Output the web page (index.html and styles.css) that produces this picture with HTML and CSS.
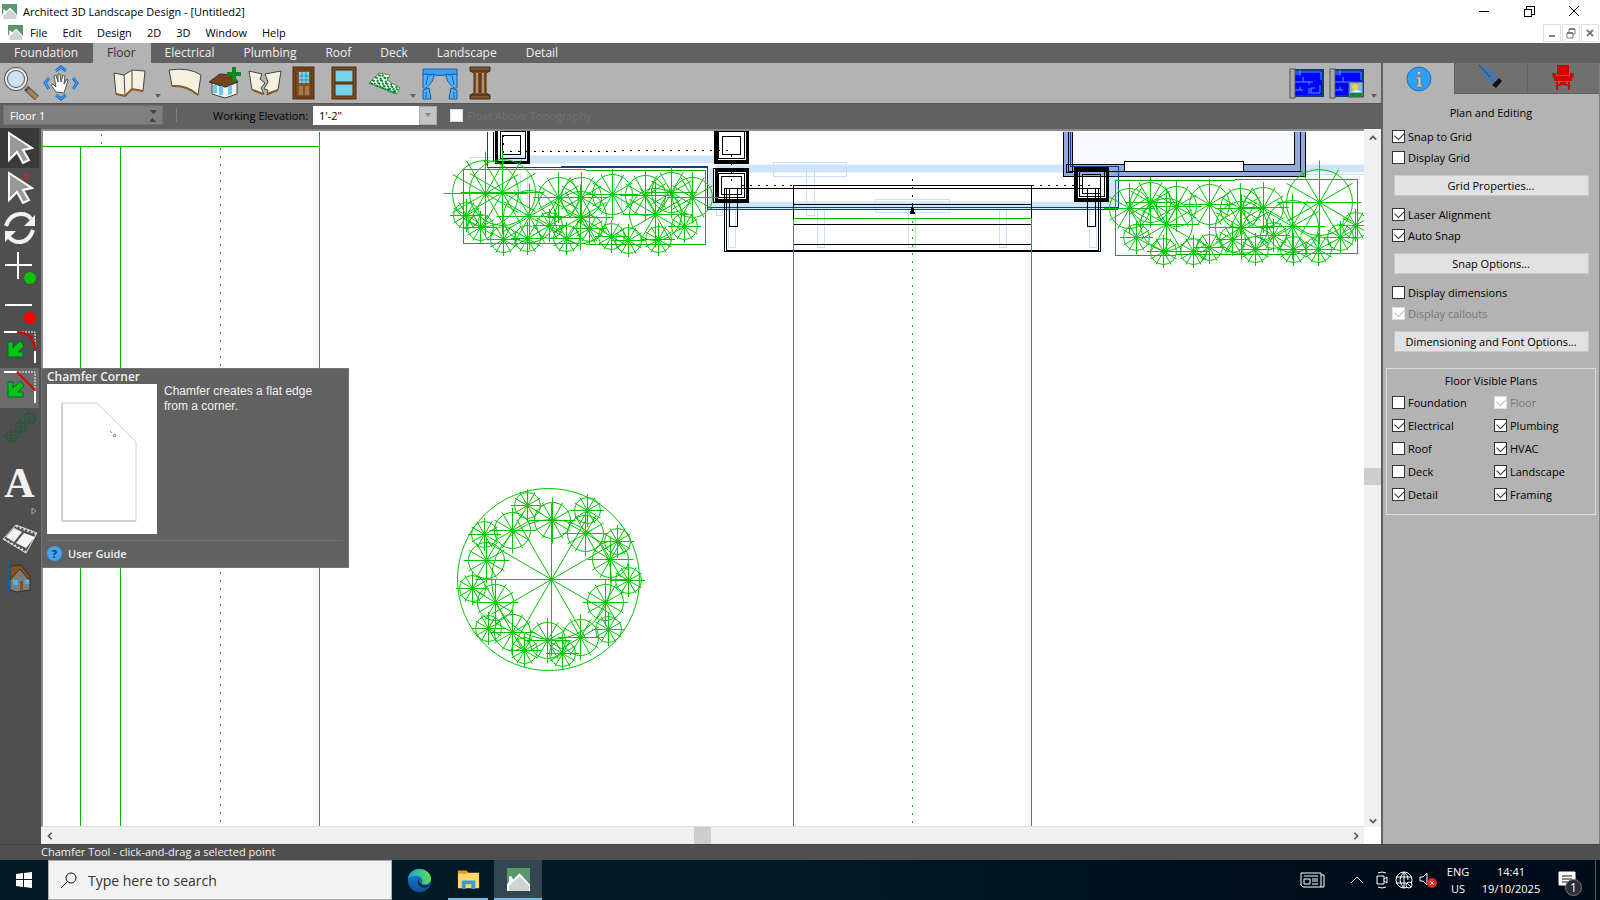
FILE: index.html
```html
<!DOCTYPE html>
<html lang="en">
<head>
    <meta charset="UTF-8">
    <meta name="viewport" content="width=device-width, initial-scale=1.0">
    <title>Architect 3D Landscape Design - [Untitled2]</title>
    <link rel="stylesheet" href="styles.css">
</head>
<body>
    <!-- Shared symbols -->
    <svg class="defs" width="0" height="0">
        <defs>
            <symbol id="logo" viewBox="0 0 22 22">
                <rect width="22" height="22" fill="#5c966f"/>
                <path d="M2 8v5l-2 3v6h22v-6L12 5 6 11 4 8z" fill="#fff"/>
                <path d="M2 22v-5L12 8l9 9v5z" fill="#d2d2d2"/>
            </symbol>
            <symbol id="cursor" viewBox="0 0 40 40">
                <path d="M9 5l23 15-9 2 6 10-6 3-6-11-8 8z" fill="#999" stroke="#fff" stroke-width="2"/>
            </symbol>
            <symbol id="blueprint" viewBox="0 0 40 40">
                <rect x="7" y="7" width="30" height="26" fill="#00f" stroke="#123a7c" stroke-width="2"/>
                <path d="M9 9h26v8M14 7v6m0-2h-5M9 19h18m-10 0v-5m6 8v-4M9 27h8m-3 0v-3m9 1v6m11-9v8H25v-5h4" fill="none" stroke="#4aa3ff"/>
                <rect x="4" y="6" width="5" height="29" fill="#aaa" stroke="#555"/>
            </symbol>
            <!-- Plan symbol for one plant, radius 1 -->
            <g id="plant">
                <circle r="1"/>
                <path d="M-1.27 0H1.27M0-1.27V1.27M-1-.58L1 .58M-1 .58L1-.58M-.58-1L.58 1M.58-1L-.58 1"/>
            </g>
        </defs>
    </svg>

    <header>
        <div class="titlebar">
            <svg class="app-icon"><use href="#logo"/></svg>
            <h1>Architect 3D Landscape Design - [Untitled2]</h1>
            <div class="caption">
                <button aria-label="Minimize"><svg viewBox="0 0 12 12"><path d="M1 6h10"/></svg></button>
                <button aria-label="Restore"><svg viewBox="0 0 12 12"><path d="M1 4h7v7H1zM3 4V1h8v8H8"/></svg></button>
                <button aria-label="Close"><svg viewBox="0 0 12 12"><path d="M1 1l10 10M11 1L1 11"/></svg></button>
            </div>
        </div>
        <nav class="menubar">
            <svg class="app-icon"><use href="#logo"/></svg>
            <a href="#">File</a>
            <a href="#">Edit</a>
            <a href="#">Design</a>
            <a href="#">2D</a>
            <a href="#">3D</a>
            <a href="#">Window</a>
            <a href="#">Help</a>
            <div class="mdi">
                <button aria-label="Minimize plan"><svg viewBox="0 0 12 12"><path d="M3 9h6"/></svg></button>
                <button aria-label="Restore plan"><svg viewBox="0 0 12 12"><path d="M2 6h6v5H2zM4 5V2h6v5H8" stroke-width="1"/><path d="M2 6h6M4 2h6"/></svg></button>
                <button aria-label="Close plan"><svg viewBox="0 0 12 12"><path d="M3 3l6 6M9 3L3 9"/></svg></button>
            </div>
        </nav>
        <nav class="tabs">
            <a href="#">Foundation</a>
            <a href="#" class="active">Floor</a>
            <a href="#">Electrical</a>
            <a href="#">Plumbing</a>
            <a href="#">Roof</a>
            <a href="#">Deck</a>
            <a href="#">Landscape</a>
            <a href="#">Detail</a>
        </nav>
    </header>

    <main>
        <div class="work">
            <div class="toolbar">
                <button aria-label="Zoom"><svg viewBox="0 0 40 40">
                    <path d="M25 25l11 10" stroke="#555" stroke-width="6"/>
                    <path d="M27 27l9 8" stroke="#a5835b" stroke-width="4"/>
                    <circle cx="15" cy="16" r="10" fill="#cfe0ee" stroke="#555" stroke-width="4"/>
                    <circle cx="15" cy="16" r="10" fill="none" stroke="#e8e8e8" stroke-width="2"/>
                </svg></button>
                <button class="spaced" aria-label="Pan"><svg viewBox="0 0 40 40">
                    <path d="M15 8l5-4 5 4M15 32l5 4 5-4M8 15l-4 5 4 6M32 15l4 5-4 6" fill="none" stroke="#1674c4" stroke-width="3"/>
                    <path d="M15 8l5-4 5 4M15 32l5 4 5-4M8 15l-4 5 4 6M32 15l4 5-4 6" fill="none" stroke="#4eb1ff"/>
                    <path d="M15 29l-5-7 2-1 3 3-2-11 2-1 2 7V11h2l1 8 2-7 2 1-1 8 3-5 1 1-4 13z" fill="#fff" stroke="#555"/>
                </svg></button>
                <button aria-label="Wall"><svg viewBox="0 0 40 40">
                    <path d="M4 10l10 2 8-5 13 1-2 20-11-2-7 7-9-2z" fill="#f5f0e0" stroke="#444"/>
                    <path d="M14 12l1 20M22 7v18" stroke="#444"/>
                    <path d="M6 31l9 2 7-7 11 2" fill="none" stroke="#8a5a20" stroke-width="2"/>
                </svg></button>
                <button class="more" aria-label="More walls"></button>
                <button aria-label="Curved wall"><svg viewBox="0 0 40 40">
                    <path d="M4 7q20-3 32 5l-3 20q-11-10-26-9z" fill="#f5f0e0" stroke="#444"/>
                    <path d="M7 23q15-1 26 9" fill="none" stroke="#8a5a20" stroke-width="2"/>
                </svg></button>
                <button aria-label="Room addition"><svg viewBox="0 0 40 40">
                    <path d="M7 20l14 4 11-5v12l-12 4-13-4z" fill="#f3f3ee" stroke="#444"/>
                    <path d="M4 19L15 11l13 1 5 7-13 5z" fill="#74431d" stroke="#333"/>
                    <path d="M8 22h4v8H8zM14 23h4v9h-4zM23 23l4-1v9l-4 1z" fill="#6cc9e8"/>
                    <path d="M29 4v14M22 11h14" stroke="#0a8a1c" stroke-width="4"/>
                </svg></button>
                <button aria-label="Break wall"><svg viewBox="0 0 40 40">
                    <path d="M4 8l13 3-2 5 5 4-4 5 3 6-12-4zM20 11l16-3-3 19-11 5 1-5-4-1 4-7z" fill="#f5f0e0" stroke="#444"/>
                    <path d="M8 27l10 4M22 31l11-4" stroke="#8a5a20" stroke-width="2"/>
                </svg></button>
                <button aria-label="Door"><svg viewBox="0 0 40 40">
                    <rect x="8" y="4" width="21" height="32" fill="#74451b" stroke="#4b2c10"/>
                    <rect x="11" y="7" width="15" height="27" fill="#855322" stroke="#5a3512"/>
                    <path d="M14 9h10v11H14z" fill="#7cd6ee"/>
                    <path d="M17 9v11M21 9v11M14 13h10M14 17h10" stroke="#3d8fb0"/>
                    <path d="M14 23h4v9h-4zM20 23h4v9h-4z" fill="#a3774f"/>
                </svg></button>
                <button aria-label="Window"><svg viewBox="0 0 40 40">
                    <rect x="7" y="4" width="24" height="32" fill="#7d4d1e" stroke="#4b2c10"/>
                    <path d="M10 7h18v12H10zM10 21h18v12H10z" fill="#78d2ea" stroke="#4b2c10"/>
                </svg></button>
                <button aria-label="Flooring"><svg viewBox="0 0 40 40">
                    <path d="M14 10l11 2-3 5 13 8-3 6L4 20z" fill="#fff" stroke="#3c8f4a"/>
                    <path d="M13 12l10 4M10 14l23 13M7 17l24 12M5 20l25 10" stroke="#0a8a2c" stroke-width="2" stroke-dasharray="3 3"/>
                    <path d="M14 11l9 4M12 14l21 11M9 16l23 12M6 19l23 11" stroke="#0a8a2c" stroke-width="2" stroke-dasharray="2 4" stroke-dashoffset="3"/>
                </svg></button>
                <button class="more" aria-label="More flooring"></button>
                <button aria-label="Curtains"><svg viewBox="0 0 40 40">
                    <path d="M3 6h34v7l-3-2q-14 3-28 0l-3 2z" fill="#3aa0f5" stroke="#1c5c9c"/>
                    <path d="M3 11q8 2 11 0 0 8-8 14H3zM37 11q-8 2-11 0 0 8 8 14h3zM3 27l6-2 2 11H3zM37 27l-6-2-2 11h8z" fill="#4eb1ff" stroke="#1c5c9c"/>
                    <path d="M8 13l-2 9M32 13l2 9M6 29v6M34 29v6" stroke="#1c5c9c"/>
                </svg></button>
                <button aria-label="Column"><svg viewBox="0 0 40 40">
                    <path d="M10 4h20v4l-4 2v20l4 2v4H10v-4l4-2V10l-4-2z" fill="#7d532d" stroke="#432b14"/>
                    <path d="M17 10v20M23 10v20" stroke="#b78d62" stroke-width="2"/>
                    <path d="M10 8h20M10 32h20M20 10v20" stroke="#432b14"/>
                </svg></button>
                <button class="push" aria-label="2D plan"><svg><use href="#blueprint"/></svg></button>
                <button aria-label="Plan with preview"><svg viewBox="0 0 40 40">
                    <use href="#blueprint"/>
                    <rect x="23" y="19" width="14" height="15" fill="#7fbbe6" stroke="#444"/>
                    <path d="M24 30h12v4H24z" fill="#178a2c"/>
                    <circle cx="29" cy="24" r="3" fill="#ffd21c"/>
                    <path d="M26 29q5-4 9 0z" fill="#fff"/>
                </svg></button>
                <button class="more" aria-label="More views"></button>
            </div>

            <div class="options">
                <select class="floor-select" aria-label="Current floor"><option>Floor 1</option></select>
                <span class="sep"></span>
                <label for="elevation" class="elevation-label">Working Elevation:</label>
                <input type="text" id="elevation" value="1'-2&quot;">
                <button class="drop" aria-label="Elevation list"></button>
                <label class="float"><input type="checkbox" disabled>Float Above Topography</label>
            </div>

            <div class="editor">
                <div class="tools">
                    <button class="pressed" aria-label="Select"><svg><use href="#cursor"/></svg></button>
                    <button aria-label="Select point"><svg viewBox="0 0 40 40"><use href="#cursor"/><path d="M24 6v6M28 6v6M23 7h6M23 11h6" stroke="#d22"/></svg></button>
                    <button aria-label="Rotate"><svg viewBox="0 0 40 40">
                        <path d="M6 18Q10 6 21 6q7 0 10 5M33 22Q29 34 19 34q-6 0-10-5" fill="none" stroke="#f2f2f2" stroke-width="4"/>
                        <path d="M35 7v11H24zM5 34V23h11z" fill="#f2f2f2"/>
                    </svg></button>
                    <button aria-label="Add point"><svg viewBox="0 0 40 40"><path d="M5 17h27M18 4v27" stroke="#fff" stroke-width="2"/><circle cx="30" cy="30" r="6" fill="#0bc30b"/></svg></button>
                    <button aria-label="Delete point"><svg viewBox="0 0 40 40"><path d="M5 17h27" stroke="#fff" stroke-width="2"/><circle cx="30" cy="30" r="6" fill="#f00"/></svg></button>
                    <button aria-label="Fillet corner"><svg viewBox="0 0 40 40">
                        <path d="M4 4h13M35 23v12" stroke="#fff" stroke-width="2"/>
                        <path d="M19 4h16v18" fill="none" stroke="#fff" stroke-dasharray="2 1"/>
                        <path d="M17 4q18 1 18 18" fill="none" stroke="#d00" stroke-width="2"/>
                        <path d="M8 14v15h15v-5h-5l6-6-4-5-7 7v-6z" fill="#0bc30b" stroke="#064" stroke-width="1"/>
                    </svg></button>
                    <div class="tool-open">
                        <button class="hot" aria-label="Chamfer corner"><svg viewBox="0 0 40 40">
                            <path d="M4 4h13M35 23v12" stroke="#fff" stroke-width="2"/>
                            <path d="M19 4h16v18" fill="none" stroke="#fff" stroke-dasharray="2 1"/>
                            <path d="M17 4l18 18" stroke="#d00" stroke-width="2"/>
                            <path d="M8 14v15h15v-5h-5l6-6-4-5-7 7v-6z" fill="#0bc30b" stroke="#064" stroke-width="1"/>
                        </svg></button>
                        <div class="tip" role="tooltip">
                            <h2>Chamfer Corner</h2>
                            <div class="tip-body">
                                <svg viewBox="0 0 110 150">
                                    <path d="M15 19h35l39 39v79H15z" fill="none" stroke="#c5d3d8"/>
                                    <path d="M15 19v118h74" fill="none" stroke="#a9bdc0"/>
                                    <path d="M63 47l2 2M66 51l2-1 1 2-2 1z" stroke="#888" fill="none"/>
                                </svg>
                                <p>Chamfer creates a flat edge from a corner.</p>
                            </div>
                            <a href="#" class="guide"><span class="help">?</span>User Guide</a>
                        </div>
                    </div>
                    <button class="spaced" aria-label="Join"><svg viewBox="0 0 40 40">
                        <path d="M7 24h9v9H7zM16 15h9v9h-9zM25 6h9v9h-9zM10 27h3v4h-3zM19 18h3v4h-3zM28 9h3v4h-3zM3 28h4M11 33v3M11 20v4M16 29h3M20 11v4M20 24v4M25 20h3M29 2v4M34 11h3M29 15v3" fill="none" stroke="#1c5a33"/>
                    </svg></button>
                    <button class="letter" aria-label="Text">A</button>
                    <button class="more-side" aria-label="More text"><svg viewBox="0 0 6 8"><path d="M1 1l4 3-4 3z" fill="none" stroke="#aaa"/></svg></button>
                    <button aria-label="Film"><svg viewBox="0 0 40 40">
                        <path d="M16 6l21 8-11 20L3 20z" fill="#555" stroke="#ddd"/>
                        <path d="M16 7l20 8M4 20l22 13" stroke="#ddd" stroke-width="2" stroke-dasharray="2 2"/>
                        <path d="M14 9l8 4-8 10-8-5zM24 14l11 4-9 11-10-5z" fill="#f4f4f4"/>
                    </svg></button>
                    <button aria-label="Elevation view"><svg viewBox="0 0 40 40">
                        <path d="M10 18l11-9 9 10v12l-13 2-7-2z" fill="#7d7d7d" stroke="#333"/>
                        <path d="M10 7l11-1 10 13-3 1-8-10-10 11z" fill="#855322" stroke="#4b2c10"/>
                        <path d="M13 21h5v5h-5zM25 21h4v4h-4z" fill="#4eb1ff"/>
                        <path d="M20 22h3v10h-3z" fill="#855322"/>
                        <path d="M9 3v32" stroke="#1c5c9c" stroke-width="2"/>
                    </svg></button>
                </div>

                <div class="canvas">
                    <svg class="plan">
                        <g transform="translate(-42.5 -130.5)">
                            <!-- Floor slab under the porch -->
                            <path class="slab" d="M494 155H715V164H1364V172H715V163H494zM708 201H1118V209H708zM708 168H713V209H708zM1107 167H1118V209H1107zM494 131H497V163H494z"/>
                            <g class="ghost">
                                <path d="M773 162H846V176H773zM775 166H844V171H775zM875 199H949V212H875zM878 203H946V207H878zM806 166H814V215H806zM716 209H722V215H716zM728 209H735V247H728zM817 209H824V247H817zM908 209H915V247H908zM999 209H1006V247H999zM1089 209H1096V247H1089z"/>
                                <path d="M470 170V157H493M520 172V214H527V172M614 172V214H621V172M1300 174H1364"/>
                            </g>

                            <!-- Garage -->
                            <path d="M1072 131H1294V164H1072z" fill="#f7f9ff"/>
                            <path d="M1063 131H1072V164H1294V131H1305V176H1063z" fill="#8faadc"/>
                            <path class="ink" d="M1063 131V176H1305V131M1068 131V171H1300V131M1072 131V164H1294V131M1066 164H1072V172H1066z"/>
                            <path class="ink pane" d="M1124 161H1243V171H1124z"/>

                            <path class="outline" d="M487 131V167H707V207H1118V166H1070V131M707 207V209H1117"/>
                            <path class="outline" d="M560 166H707"/>

                            <!-- Posts -->
                            <g class="ink">
                                <path class="heavy" d="M496 125H528V162H496zM716 125H747V161H716zM716 170H747V200H716zM1076 169H1107V199H1076z"/>
                                <path d="M493 131V161M500 131H525V158H500zM502 135H520V154H502zM714 131H748V163H714zM718 131H744V158H718zM722 136H740V154H722zM713 168H748V202H713zM718 173H744V197H718zM721 176H741V194H721zM1074 167H1108V201H1074zM1079 171H1104V196H1079zM1082 174H1100V193H1082z"/>
                                <path class="dots" d="M510 151L730 150M741 185H793M1031 185H1095"/>
                                <path class="dots" d="M503 134V154M731 154V180M912 178V205"/>
                            </g>

                            <!-- Porch railing and steps -->
                            <g class="ink">
                                <path d="M724 188H1100V251H724zM726 188V250H1098V188M729 188H737V226H729zM1087 188H1095V226H1087z"/>
                                <path d="M793 218V185H1031V218M793 204H1031M793 224H1031M793 244H1031"/>
                                <path d="M910 213L912 205 914 213z" fill="#000"/>
                            </g>

                            <!-- Paths and driveway -->
                            <g class="green">
                                <path d="M42 146H319M80 146V2000M120 146V2000M319 131V2000M793 218V2000M1031 218V2000M793 218H1031"/>
                                <path class="dashes" d="M101 133V144M220 147V2000M912 220V2000"/>
                                <path d="M463 169L705 170V244L463 243zM1115 180L1357 179V253L1115 255z"/>
                            </g>

                            <!-- Left bed -->
                            <g class="plants">
                                <use href="#plant" transform="translate(485 193) scale(33)"/>
                                <use href="#plant" transform="translate(502 192) scale(33)"/>
                                <use href="#plant" transform="translate(529 216) scale(26)"/>
                                <use href="#plant" transform="translate(580 217) scale(26)"/>
                                <use href="#plant" transform="translate(655 214) scale(26)"/>
                                <use href="#plant" transform="translate(558 197) scale(20)"/>
                                <use href="#plant" transform="translate(581 197) scale(20)"/>
                                <use href="#plant" transform="translate(612 194) scale(20)"/>
                                <use href="#plant" transform="translate(645 195) scale(20)"/>
                                <use href="#plant" transform="translate(671 192) scale(20)"/>
                                <use href="#plant" transform="translate(692 197) scale(20)"/>
                                <use href="#plant" transform="translate(466 215) scale(13)"/>
                                <use href="#plant" transform="translate(480 227) scale(13)"/>
                                <use href="#plant" transform="translate(503 239) scale(13)"/>
                                <use href="#plant" transform="translate(527 238) scale(13)"/>
                                <use href="#plant" transform="translate(549 225) scale(13)"/>
                                <use href="#plant" transform="translate(566 238) scale(13)"/>
                                <use href="#plant" transform="translate(589 228) scale(13)"/>
                                <use href="#plant" transform="translate(611 236) scale(13)"/>
                                <use href="#plant" transform="translate(628 240) scale(13)"/>
                                <use href="#plant" transform="translate(658 239) scale(13)"/>
                                <use href="#plant" transform="translate(684 226) scale(13)"/>
                            </g>

                            <!-- Right bed -->
                            <g class="plants">
                                <use href="#plant" transform="translate(1319 202) scale(33)"/>
                                <use href="#plant" transform="translate(1292 226) scale(26)"/>
                                <use href="#plant" transform="translate(1166 224) scale(26)"/>
                                <use href="#plant" transform="translate(1241 227) scale(26)"/>
                                <use href="#plant" transform="translate(1129 208) scale(20)"/>
                                <use href="#plant" transform="translate(1150 202) scale(20)"/>
                                <use href="#plant" transform="translate(1176 206) scale(20)"/>
                                <use href="#plant" transform="translate(1209 204) scale(20)"/>
                                <use href="#plant" transform="translate(1240 208) scale(20)"/>
                                <use href="#plant" transform="translate(1263 207) scale(20)"/>
                                <use href="#plant" transform="translate(1136 237) scale(13)"/>
                                <use href="#plant" transform="translate(1163 251) scale(13)"/>
                                <use href="#plant" transform="translate(1193 251) scale(13)"/>
                                <use href="#plant" transform="translate(1209 247) scale(13)"/>
                                <use href="#plant" transform="translate(1232 239) scale(13)"/>
                                <use href="#plant" transform="translate(1255 249) scale(13)"/>
                                <use href="#plant" transform="translate(1273 235) scale(13)"/>
                                <use href="#plant" transform="translate(1293 249) scale(13)"/>
                                <use href="#plant" transform="translate(1318 249) scale(13)"/>
                                <use href="#plant" transform="translate(1340 237) scale(13)"/>
                                <use href="#plant" transform="translate(1355 225) scale(13)"/>
                            </g>

                            <!-- Round bed with a tree in the middle -->
                            <g class="plants">
                                <circle cx="548" cy="579" r="91"/>
                                <use href="#plant" transform="translate(551 579) scale(60)"/>
                                <use href="#plant" transform="translate(552 520) scale(18)"/>
                                <use href="#plant" transform="translate(512 530) scale(18)"/>
                                <use href="#plant" transform="translate(486 560) scale(18)"/>
                                <use href="#plant" transform="translate(495 602) scale(18)"/>
                                <use href="#plant" transform="translate(512 632) scale(18)"/>
                                <use href="#plant" transform="translate(547 640) scale(18)"/>
                                <use href="#plant" transform="translate(580 637) scale(18)"/>
                                <use href="#plant" transform="translate(605 602) scale(18)"/>
                                <use href="#plant" transform="translate(610 559) scale(18)"/>
                                <use href="#plant" transform="translate(585 533) scale(18)"/>
                                <use href="#plant" transform="translate(527 505) scale(13)"/>
                                <use href="#plant" transform="translate(587 510) scale(13)"/>
                                <use href="#plant" transform="translate(617 541) scale(13)"/>
                                <use href="#plant" transform="translate(628 580) scale(13)"/>
                                <use href="#plant" transform="translate(608 629) scale(13)"/>
                                <use href="#plant" transform="translate(562 653) scale(13)"/>
                                <use href="#plant" transform="translate(524 650) scale(13)"/>
                                <use href="#plant" transform="translate(488 628) scale(13)"/>
                                <use href="#plant" transform="translate(472 588) scale(13)"/>
                                <use href="#plant" transform="translate(484 534) scale(13)"/>
                            </g>
                        </g>
                    </svg>
                    <div class="vscroll">
                        <button aria-label="Scroll up"><svg viewBox="0 0 10 10"><path d="M1 7l4-4 4 4"/></svg></button>
                        <div class="track"><div class="thumb"></div></div>
                        <button aria-label="Scroll down"><svg viewBox="0 0 10 10"><path d="M1 3l4 4 4-4"/></svg></button>
                    </div>
                    <div class="hscroll">
                        <button aria-label="Scroll left"><svg viewBox="0 0 10 10"><path d="M7 1L3 5l4 4"/></svg></button>
                        <div class="track"><div class="thumb"></div></div>
                        <button aria-label="Scroll right"><svg viewBox="0 0 10 10"><path d="M3 1l4 4-4 4"/></svg></button>
                    </div>
                </div>
            </div>
        </div>

        <aside>
            <div class="panel-tabs">
                <button class="active" aria-label="Properties"><svg viewBox="0 0 28 28">
                    <circle cx="14" cy="14" r="12" fill="#2e9fff" stroke="#1c6fba"/>
                    <path d="M11 12h5v8h2v2h-7v-2h2v-6h-2z" fill="#ccc" stroke="#777"/>
                    <circle cx="14" cy="8" r="2" fill="#ccc" stroke="#777"/>
                </svg></button>
                <button aria-label="Draw"><svg viewBox="0 0 28 28">
                    <path d="M2 1q11 3 15 7l4 6-6 6-7-5q-3-6-6-14z" fill="#4a76a8"/>
                    <path d="M2 1l11 12" stroke="#274563"/>
                    <path d="M15 21l7-7 3 3-6 7z" fill="#111"/>
                </svg></button>
                <button aria-label="Objects"><svg viewBox="0 0 28 28">
                    <path d="M8 1h12v10H8zM3 9h4v3h14V9h4l-1 5H4zM5 13h18v4H5zM7 18h2v8H7zM19 18h2v8h-2zM11 18h6v2h2v2h-3v-1h-4v1H9v-2h2z" fill="#d40000"/>
                </svg></button>
            </div>
            <div class="panel">
                <h2>Plan and Editing</h2>
                <label><input type="checkbox" checked>Snap to Grid</label>
                <label><input type="checkbox">Display Grid</label>
                <button>Grid Properties...</button>
                <label><input type="checkbox" checked>Laser Alignment</label>
                <label><input type="checkbox" checked>Auto Snap</label>
                <button>Snap Options...</button>
                <label><input type="checkbox">Display dimensions</label>
                <label class="off"><input type="checkbox" checked disabled>Display callouts</label>
                <button>Dimensioning and Font Options...</button>
                <section class="plans">
                    <h2>Floor Visible Plans</h2>
                    <label><input type="checkbox">Foundation</label>
                    <label class="off"><input type="checkbox" checked disabled>Floor</label>
                    <label><input type="checkbox" checked>Electrical</label>
                    <label><input type="checkbox" checked>Plumbing</label>
                    <label><input type="checkbox">Roof</label>
                    <label><input type="checkbox" checked>HVAC</label>
                    <label><input type="checkbox">Deck</label>
                    <label><input type="checkbox" checked>Landscape</label>
                    <label><input type="checkbox" checked>Detail</label>
                    <label><input type="checkbox" checked>Framing</label>
                </section>
            </div>
        </aside>
    </main>

    <div class="status">Chamfer Tool - click-and-drag a selected point</div>

    <footer class="taskbar">
        <button class="start" aria-label="Start"><svg viewBox="0 0 16 16"><path d="M0 2l7-1v6H0zM8 1l8-1v7H8zM0 8h7v7l-7-1zM8 8h8v8l-8-1z" fill="#fff"/></svg></button>
        <div class="search">
            <svg viewBox="0 0 18 18"><circle cx="11" cy="7" r="5" fill="none" stroke="#111"/><path d="M7 11l-6 6" stroke="#111"/></svg>
            <input type="text" placeholder="Type here to search" aria-label="Search">
        </div>
        <button class="task" aria-label="Edge"><svg viewBox="0 0 26 26">
            <defs>
                <linearGradient id="edgeTop" x1="0" y1="0" x2="1" y2="0"><stop offset="0" stop-color="#1ba1e2"/><stop offset="1" stop-color="#60dc50"/></linearGradient>
                <linearGradient id="edgeLow" x1="0" y1="0" x2="0" y2="1"><stop offset="0" stop-color="#1b86d8"/><stop offset="1" stop-color="#0c4f9e"/></linearGradient>
            </defs>
            <circle cx="13" cy="13" r="12" fill="url(#edgeLow)"/>
            <path d="M1 11C2 4 8 1 13 1c7 0 12 5 12 10 0 4-3 6-6 6-3 0-4-1-3-3 1-5-8-9-15-3z" fill="url(#edgeTop)"/>
            <path d="M15 10c-3 0-4 6 1 8 3 1 6 0 8-1-3 4-8 4-10 2-4-3-3-8 1-9z" fill="#001b26"/>
        </svg></button>
        <button class="task running" aria-label="File Explorer"><svg viewBox="0 0 26 26">
            <path d="M2 4h9l2 2h11v16H2z" fill="#ffd667"/>
            <path d="M2 4h9l2 3H2z" fill="#e5a00f"/>
            <path d="M6 14h14v9h-4v-5h-6v5H6z" fill="#3d97dd"/>
        </svg></button>
        <button class="task running current" aria-label="Architect 3D"><svg><use href="#logo"/></svg></button>
        <div class="tray">
            <svg class="news" viewBox="0 0 26 18"><path d="M1 2h20v14H3l-2-2zM21 4h3v12h-3M4 5h14M4 8h6v5H4zM12 8h6M12 10h6M12 13h6"/></svg>
            <svg class="chevron" viewBox="0 0 14 14"><path d="M1 10l6-6 6 6"/></svg>
            <svg viewBox="0 0 18 18"><path d="M4 5h7v8H4zM11 8l3-2v6l-3-2M5 2q4-2 8 0M5 16q4 2 8 0"/></svg>
            <svg class="globe" viewBox="0 0 18 18"><circle cx="9" cy="9" r="8"/><path d="M1 6h16M1 12h10M9 1v16M9 1q-8 8 0 16M9 1q5 4 4 8"/><circle cx="14" cy="14" r="3" fill="#020f1c"/><path d="M12 12l4 4"/></svg>
            <svg class="sound" viewBox="0 0 18 18"><path d="M1 6h3l4-4v12l-4-4H1z"/><circle cx="13" cy="12" r="5" fill="#e22" stroke="none"/><path d="M11 10l4 4M15 10l-4 4"/></svg>
            <div class="lang">ENG<br>US</div>
            <div class="clock">14:41<br>19/10/2025</div>
            <button class="notes" aria-label="Notifications">
                <svg viewBox="0 0 18 18"><path d="M1 1h16v13h-5l-3 3v-3H1z" fill="#fff"/><path d="M4 5h10M4 8h10M4 11h7" stroke="#111"/></svg>
                <span class="badge">1</span>
            </button>
        </div>
    </footer>
</body>
</html>
```

FILE: styles.css
```css
* {
    box-sizing: border-box;
}

html, body {
    margin: 0;
    height: 100%;
    overflow: hidden;
}

body {
    display: flex;
    flex-direction: column;
    font-family: "Open Sans", "Noto Sans", sans-serif;
    font-size: 11px;
    color: #000;
    background: #fff;
}

h1, h2, p {
    margin: 0;
    font-size: inherit;
    font-weight: normal;
}

button {
    padding: 0;
    border: 0;
    background: none;
    font: inherit;
    color: inherit;
}

a {
    color: inherit;
    text-decoration: none;
}

svg {
    display: block;
}

.defs {
    position: absolute;
}

.app-icon {
    width: 15px;
    height: 15px;
}

/* Window header */
.titlebar {
    display: flex;
    align-items: center;
    height: 22px;
    padding: 0 4px 0 2px;
    gap: 6px;
}

.caption, .mdi {
    display: flex;
    margin-left: auto;
}

.caption button {
    display: flex;
    justify-content: center;
    width: 45px;
}

.caption svg {
    width: 12px;
    height: 12px;
    fill: none;
    stroke: #000;
    shape-rendering: crispEdges;
}

.menubar {
    display: flex;
    align-items: center;
    height: 21px;
    padding-left: 8px;
    gap: 15px;
}

.menubar .app-icon {
    margin-right: -8px;
}

.mdi {
    gap: 1px;
    padding-right: 1px;
}

.mdi button {
    width: 18px;
    height: 18px;
    padding: 2px;
    border: 1px solid #e0e0e0;
}

.mdi svg {
    width: 12px;
    height: 12px;
    fill: none;
    stroke: #6f7f8f;
    stroke-width: 2;
}

.tabs {
    display: flex;
    height: 20px;
    background: #616161;
    color: #f0f0f0;
    font-size: 12px;
    line-height: 19px;
}

.tabs a {
    padding: 0 15px 0 14px;
}

.tabs .active {
    background: #b3b3b3;
    color: #333;
}

main {
    display: flex;
    flex: 1;
    min-height: 0;
    background: #616161;
}

.work {
    display: flex;
    flex-direction: column;
    flex: 1;
    min-width: 0;
}

/* Toolbar */
.toolbar {
    display: flex;
    height: 40px;
    padding-left: 1px;
    background: #b3b3b3;
}

.toolbar button {
    width: 40px;
    height: 40px;
}

.toolbar svg {
    width: 40px;
    height: 40px;
}

.toolbar .spaced {
    margin-right: 29px;
}

.toolbar .push {
    margin-left: auto;
}

.toolbar .more {
    display: flex;
    align-items: flex-end;
    justify-content: center;
    width: 15px;
    padding-bottom: 5px;
}

.more::after, .drop::after {
    content: "";
    border: 3px solid transparent;
    border-top: 4px solid #606060;
    border-bottom: 0;
}

.options {
    display: flex;
    align-items: center;
    height: 25px;
    padding: 0 0 2px 3px;
    border-top: 1px solid #555;
}

.floor-select {
    width: 160px;
    height: 20px;
    padding: 0 6px;
    border: 1px solid #707070;
    appearance: none;
    background:
        conic-gradient(from 135deg at 50% 0, #444 90deg, transparent 0) 96% 12px / 6px 4px no-repeat,
        conic-gradient(from -45deg at 50% 100%, #444 90deg, transparent 0) 96% 4px / 6px 4px no-repeat,
        #808080;
    color: #fff;
    font: inherit;
}

.sep {
    width: 1px;
    height: 14px;
    margin: 0 36px 0 13px;
    background: #808080;
}

.elevation-label {
    width: 100px;
    white-space: nowrap;
}

.options input[type="text"] {
    width: 106px;
    height: 19px;
    padding: 0 6px;
    border: 0;
    background: #fff;
    font: inherit;
}

.drop {
    display: flex;
    align-items: center;
    justify-content: center;
    width: 18px;
    height: 19px;
    border: 1px solid #aaa;
    background: #c4c4c4;
}

.drop::after {
    border-top-color: #888;
}

.float {
    display: flex;
    align-items: center;
    gap: 4px;
    margin-left: 13px;
    color: #717171;
}

input[type="checkbox"] {
    flex: none;
    position: relative;
    width: 13px;
    height: 13px;
    margin: 0;
    border: 1px solid #333;
    background: #fff;
    appearance: none;
}

input[type="checkbox"]:disabled {
    border-color: #ddd;
}

input[type="checkbox"]:checked::after {
    content: "";
    position: absolute;
    left: 2px;
    top: 1px;
    width: 8px;
    height: 5px;
    border: solid #333;
    border-width: 0 0 1px 1px;
    transform: rotate(-45deg);
}

input[type="checkbox"]:disabled::after {
    border-color: #bbb;
}

/* Tool column */
.editor {
    display: flex;
    flex: 1;
    min-height: 0;
}

.tools {
    position: relative;
    z-index: 1;
    flex: none;
    width: 41px;
    background: #4f4f4f;
}

.tools button {
    display: block;
    width: 39px;
    height: 40px;
}

.tools svg {
    width: 40px;
    height: 40px;
}

.tools .pressed {
    background: #393939;
}

.tools .hot {
    background: #6b6b6b;
}

.tools .spaced {
    margin-bottom: 15px;
}

.tools .letter {
    color: #f2f2f2;
    font: bold 42px/40px "Liberation Serif", serif;
}

.tools .more-side {
    height: 16px;
    padding-left: 31px;
}

.tools .more-side svg {
    width: 6px;
    height: 8px;
}

.tool-open {
    position: relative;
}

.tip {
    position: absolute;
    left: 41px;
    top: 0;
    width: 308px;
    height: 200px;
    padding: 0 5px;
    border: 1px solid #737373;
    background: #616161;
    color: #f0f0f0;
}

.tip h2 {
    font-size: 12px;
    font-weight: 600;
    line-height: 15px;
}

.tip-body {
    display: flex;
    gap: 7px;
    height: 157px;
    border-bottom: 1px solid #737373;
}

.tip-body svg {
    flex: none;
    width: 110px;
    height: 150px;
    background: #fff;
}

.tip-body p {
    padding-right: 16px;
    font: 12px/15px "Liberation Sans", sans-serif;
}

.guide {
    display: flex;
    align-items: center;
    gap: 6px;
    height: 24px;
    font-weight: 600;
}

.help {
    width: 15px;
    height: 15px;
    border-radius: 50%;
    background: #3fa5f5;
    color: #333;
    font-weight: 700;
    line-height: 15px;
    text-align: center;
}

/* Plan canvas */
.canvas {
    display: grid;
    grid-template-columns: minmax(0, 1fr) 17px;
    grid-template-rows: minmax(0, 1fr) 17px;
    flex: 1;
    min-width: 0;
    margin-top: 1px;
    background: #fff;
}

.plan {
    width: 100%;
    height: 100%;
    border-top: 2px solid #8a8a8a;
    border-left: 2px solid #8a8a8a;
    border-bottom: 1px solid #ddd;
    fill: none;
}

.slab {
    fill: #cfe5fb;
}

.ghost, .ink, .outline, .green {
    fill: none;
    stroke: #c4e0fb;
    shape-rendering: crispEdges;
}

.ink {
    stroke: #000;
}

.pane {
    fill: #fff;
}

.heavy {
    stroke-width: 3;
}

.outline {
    stroke: #0b3f87;
}

.dots {
    stroke-dasharray: 2 6;
}

.green {
    stroke: #00b400;
}

.dashes {
    stroke-dasharray: 2 6;
}

.plants {
    fill: none;
    stroke: #00c400;
}

#plant * {
    vector-effect: non-scaling-stroke;
}

.vscroll, .hscroll {
    display: flex;
    background: #f0f0f0;
}

.vscroll {
    flex-direction: column;
}

.vscroll button, .hscroll button {
    display: flex;
    flex: none;
    align-items: center;
    justify-content: center;
    width: 17px;
    height: 17px;
}

.vscroll svg, .hscroll svg {
    width: 8px;
    height: 8px;
    fill: none;
    stroke: #555;
    stroke-width: 2;
}

.track {
    display: flex;
    flex: 1;
}

.vscroll .track {
    flex-direction: column;
    justify-content: center;
    padding-bottom: 8px;
}

.vscroll button:last-child {
    height: 13px;
}

.hscroll .track {
    justify-content: center;
}

.thumb {
    width: 17px;
    height: 17px;
    background: #cdcdcd;
}

/* Side panel */
aside {
    flex: none;
    width: 219px;
    border-left: 2px solid #616161;
    border-right: 1px solid #808080;
    background: #b3b3b3;
}

.panel-tabs {
    display: flex;
    height: 31px;
}

.panel-tabs button {
    display: flex;
    flex: 1;
    align-items: center;
    justify-content: center;
    border: solid #616161;
    border-width: 0 0 1px 1px;
    background: #707070;
}

.panel-tabs .active {
    border: 0;
    background: none;
}

.panel-tabs svg {
    width: 28px;
    height: 28px;
}

.panel {
    padding: 9px 3px 0;
}

.panel h2 {
    margin-bottom: 3px;
    line-height: 20px;
    text-align: center;
}

.panel label {
    display: flex;
    align-items: center;
    gap: 3px;
    height: 21px;
    padding-left: 6px;
    white-space: nowrap;
}

.panel .off {
    color: #777;
}

.panel > button {
    display: block;
    width: 195px;
    height: 21px;
    margin: 7px auto 9px;
    border: 1px solid #c8c8c8;
    background: #e1e1e1;
}

.panel > button + label {
    margin-top: -1px;
}

.plans {
    display: grid;
    grid-template-columns: 102px 1fr;
    margin-top: 16px;
    padding: 2px 0 8px;
    border: 1px solid #dadada;
}

.plans h2 {
    grid-column: span 2;
    margin-bottom: 0;
}

.plans label {
    height: 23px;
    padding-left: 5px;
}

.status {
    height: 16px;
    padding-left: 41px;
    border-top: 1px solid #444;
    background: #4f4f4f;
    color: #f0f0f0;
    line-height: 14px;
}

/* Taskbar */
.taskbar {
    display: flex;
    height: 40px;
    background: linear-gradient(90deg, #001b26, #001b26 50%, #010c1a 85%);
    color: #fff;
}

.start {
    display: flex;
    align-items: center;
    justify-content: center;
    width: 48px;
}

.start svg {
    width: 16px;
    height: 16px;
}

.search {
    display: flex;
    align-items: center;
    width: 344px;
    padding-left: 11px;
    gap: 10px;
    border: 1px solid #aaa;
    background: #f2f2f2;
}

.search svg {
    width: 18px;
    height: 18px;
}

.search input {
    flex: 1;
    padding: 0;
    border: 0;
    background: none;
    font: 14px "Open Sans", sans-serif;
}

.search input::placeholder {
    color: #333;
}

.task {
    display: flex;
    align-items: center;
    justify-content: center;
    width: 50px;
    padding-left: 4px;
}

.task svg {
    width: 25px;
    height: 25px;
}

.running {
    border-bottom: 2px solid #76b9ed;
    margin-left: 6px;
    width: 40px;
    padding: 0;
}

.current {
    width: 48px;
    background: #334750;
}

.current svg {
    width: 23px;
    height: 23px;
}

.tray {
    display: flex;
    align-items: center;
    margin-left: auto;
    margin-right: 4px;
    border-right: 1px solid #555;
}

.tray svg {
    width: 18px;
    height: 18px;
    margin-right: 4px;
    fill: none;
    stroke: #fff;
}

.tray .news {
    width: 26px;
    margin-right: 24px;
}

.tray .chevron {
    width: 14px;
    height: 14px;
    margin-right: 9px;
}

.tray .globe {
    margin-right: 6px;
}

.tray .sound {
    margin-right: 2px;
}

.lang, .clock {
    line-height: 17px;
    text-align: center;
}

.lang {
    width: 38px;
}

.clock {
    width: 68px;
}

.notes {
    position: relative;
    width: 50px;
    height: 40px;
    padding-left: 13px;
}

.badge {
    position: absolute;
    left: 20px;
    top: 19px;
    width: 17px;
    height: 17px;
    border: 1px solid #777;
    border-radius: 50%;
    background: #2a2f36;
    font-size: 12px;
    line-height: 15px;
}
```
